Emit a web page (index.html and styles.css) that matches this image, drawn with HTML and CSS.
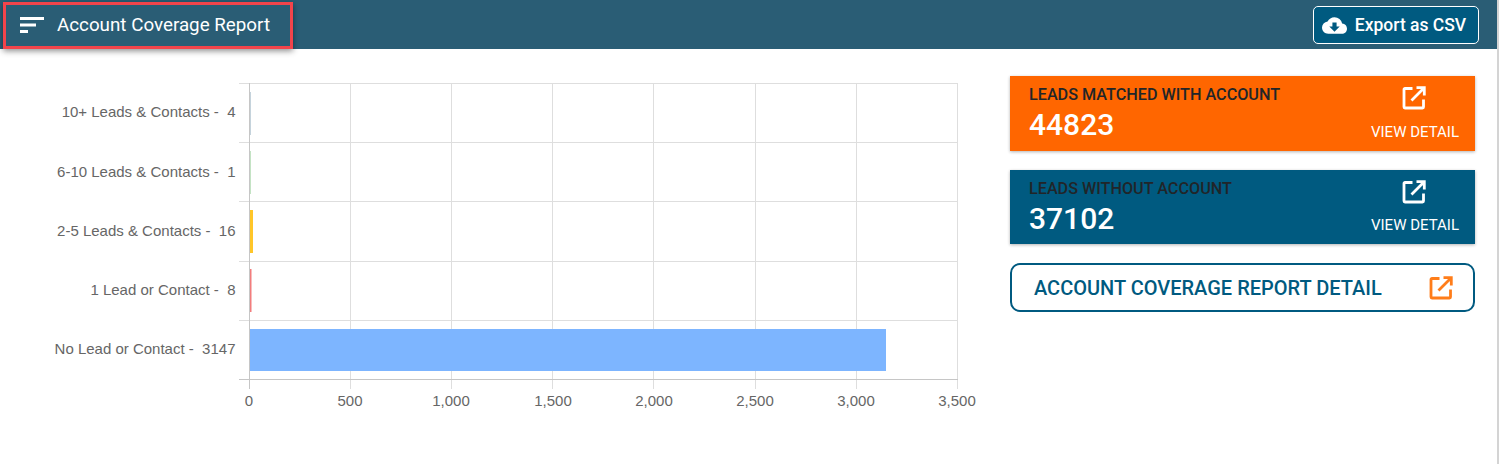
FILE: index.html
```html
<!DOCTYPE html>
<html lang="en">
<head>
  <meta charset="UTF-8" />
  <title>Account Coverage Report</title>
  <link rel="stylesheet" href="styles.css">
</head>
<body>
  <header class="topbar">
    <div class="title-box">
      <svg class="menu-icon" viewBox="0 0 24 16" width="24" height="16">
        <rect x="0" y="0" width="24" height="3" fill="#fff"/>
        <rect x="0" y="6.5" width="16" height="3" fill="#fff"/>
        <rect x="0" y="13" width="8" height="3" fill="#fff"/>
      </svg>
      <span class="title">Account Coverage Report</span>
    </div>
    <button class="export-btn">
      <svg viewBox="0 0 24 24" width="25" height="25">
        <path fill="#fff" d="M19.35 10.04A7.49 7.49 0 0 0 12 4C9.11 4 6.6 5.64 5.35 8.04A5.994 5.994 0 0 0 0 14c0 3.31 2.69 6 6 6h13c2.76 0 5-2.24 5-5 0-2.64-2.05-4.78-4.65-4.96zM17 13l-5 5-5-5h3V9h4v4h3z"/>
      </svg>
      Export as CSV
    </button>
  </header>

  <main class="content">
    <div class="chart">
      <svg viewBox="0 1 990 340" width="990" height="340">
        <g class="grid">
          <line x1="350.5" y1="8" x2="350.5" y2="314"/>
          <line x1="451.5" y1="8" x2="451.5" y2="314"/>
          <line x1="552.5" y1="8" x2="552.5" y2="314"/>
          <line x1="653.5" y1="8" x2="653.5" y2="314"/>
          <line x1="755.5" y1="8" x2="755.5" y2="314"/>
          <line x1="856.5" y1="8" x2="856.5" y2="314"/>
          <line x1="957.5" y1="8" x2="957.5" y2="314"/>
          <line x1="239" y1="8.5" x2="958" y2="8.5"/>
          <line x1="239" y1="67.5" x2="958" y2="67.5"/>
          <line x1="239" y1="126.5" x2="958" y2="126.5"/>
          <line x1="239" y1="186.5" x2="958" y2="186.5"/>
          <line x1="239" y1="245.5" x2="958" y2="245.5"/>
        </g>
        <rect x="250" y="17" width="1" height="43" fill="#c5d3dc"/>
        <rect x="250" y="76" width="1" height="43" fill="#c4e3c4"/>
        <rect x="250" y="135" width="3" height="43" fill="#ffc629"/>
        <rect x="250" y="194" width="1.5" height="43" fill="#f27d7d"/>
        <rect x="250" y="254" width="636" height="42" fill="#7db5ff"/>
        <g class="axis">
          <line x1="249.5" y1="8" x2="249.5" y2="314"/>
          <line x1="239" y1="304.5" x2="958" y2="304.5"/>
        </g>
        <g class="labels-y">
          <text x="235.5" y="42">10+ Leads &amp; Contacts -  4</text>
          <text x="235.5" y="102">6-10 Leads &amp; Contacts -  1</text>
          <text x="235.5" y="161">2-5 Leads &amp; Contacts -  16</text>
          <text x="235.5" y="220">1 Lead or Contact -  8</text>
          <text x="235.5" y="279">No Lead or Contact -  3147</text>
        </g>
        <g class="labels-x">
          <text x="249" y="331">0</text>
          <text x="350" y="331">500</text>
          <text x="451" y="331">1,000</text>
          <text x="553" y="331">1,500</text>
          <text x="654" y="331">2,000</text>
          <text x="755" y="331">2,500</text>
          <text x="856" y="331">3,000</text>
          <text x="957" y="331">3,500</text>
        </g>
      </svg>
    </div>

    <aside class="side">
      <div class="stat-card orange">
        <div class="stat-left">
          <div class="stat-label">LEADS MATCHED WITH ACCOUNT</div>
          <div class="stat-value">44823</div>
        </div>
        <div class="stat-right">
          <svg viewBox="0 0 24 24" width="24" height="24"><path fill="none" stroke="#fff" stroke-width="2.8" d="M10.5 2.5H3a1 1 0 0 0-1 1V21a1 1 0 0 0 1 1h17.5a1 1 0 0 0 1-1V13.5M9.5 14.5 22 2M14.5 1.7h7.8v7.8"/></svg>
          <span>VIEW DETAIL</span>
        </div>
      </div>
      <div class="stat-card blue">
        <div class="stat-left">
          <div class="stat-label">LEADS WITHOUT ACCOUNT</div>
          <div class="stat-value">37102</div>
        </div>
        <div class="stat-right">
          <svg viewBox="0 0 24 24" width="24" height="24"><path fill="none" stroke="#fff" stroke-width="2.8" d="M10.5 2.5H3a1 1 0 0 0-1 1V21a1 1 0 0 0 1 1h17.5a1 1 0 0 0 1-1V13.5M9.5 14.5 22 2M14.5 1.7h7.8v7.8"/></svg>
          <span>VIEW DETAIL</span>
        </div>
      </div>
      <div class="detail-btn">
        <span>ACCOUNT COVERAGE REPORT DETAIL</span>
        <svg viewBox="0 0 24 24" width="24" height="24"><path fill="none" stroke="#ff7d1a" stroke-width="2.8" d="M10.5 2.5H3a1 1 0 0 0-1 1V21a1 1 0 0 0 1 1h17.5a1 1 0 0 0 1-1V13.5M9.5 14.5 22 2M14.5 1.7h7.8v7.8"/></svg>
      </div>
    </aside>
  </main>
</body>
</html>
```

FILE: styles.css
```css
html, body {
  margin: 0;
  height: 464px;
  overflow: hidden;
}

body {
  background: white;
  font-family: Roboto, Arial, sans-serif;
  border-right: 2px solid #d4d4d4;
  box-sizing: border-box;
}

.topbar {
  height: 49px;
  background: #2a5d75;
  display: flex;
  align-items: flex-start;
  justify-content: space-between;
  padding: 0 18px 0 3px;
}

.title-box {
  width: 290px;
  height: 47px;
  margin-top: 2px;
  box-sizing: border-box;
  border: 3px solid #f2444b;
  box-shadow: 0 2px 6px rgba(0,0,0,0.45);
  display: flex;
  align-items: center;
  padding: 0 0 2px 14px;
  gap: 13px;
  color: white;
}

.title {
  font-size: 18.8px;
}

.export-btn {
  width: 166px;
  height: 38px;
  margin-top: 6px;
  background: #005a80;
  color: white;
  border: 1px solid white;
  border-radius: 5px;
  font-family: inherit;
  font-size: 17.5px;
  font-weight: 500;
  display: flex;
  align-items: center;
  justify-content: center;
  gap: 8px;
  padding: 0 4px 0 0;
}

.content {
  display: flex;
  padding-top: 27px;
}

.chart {
  width: 1010px;
  height: 340px;
  flex-shrink: 0;
}

.chart svg {
  display: block;
}

.grid line {
  stroke: #dedede;
  stroke-width: 1;
}

.axis line {
  stroke: #c6c6c6;
  stroke-width: 1;
}

.labels-y text,
.labels-x text {
  font-family: "Liberation Sans", Arial, sans-serif;
  font-size: 15px;
  fill: #666;
  white-space: pre;
}

.labels-y text {
  text-anchor: end;
}

.labels-x text {
  text-anchor: middle;
}

.side {
  width: 465px;
  display: flex;
  flex-direction: column;
  gap: 19px;
}

.stat-card {
  height: 75px;
  display: flex;
  justify-content: space-between;
  box-sizing: border-box;
  padding: 9px 16px 0 19px;
  box-shadow: 0 1px 3px rgba(0,0,0,0.3);
  color: white;
}

.stat-card.orange {
  background: #ff6600;
}

.stat-card.blue {
  height: 74px;
  background: #005a80;
}

.stat-card.blue .stat-right {
  gap: 12px;
}

.stat-label {
  font-size: 16.2px;
  font-weight: 500;
  color: #212529;
  line-height: 19px;
}

.stat-value {
  font-size: 30px;
  font-weight: 500;
  line-height: 42px;
}

.stat-right {
  display: flex;
  flex-direction: column;
  align-items: center;
  font-size: 15px;
  gap: 13px;
  padding-top: 1px;
}

.stat-right svg {
  margin-right: 2px;
}

.detail-btn {
  height: 49px;
  box-sizing: border-box;
  border: 2px solid #005a80;
  border-radius: 10px;
  display: flex;
  align-items: center;
  justify-content: space-between;
  padding: 0 20px 0 22px;
  color: #005a80;
  font-size: 20px;
  font-weight: 500;
}
```
